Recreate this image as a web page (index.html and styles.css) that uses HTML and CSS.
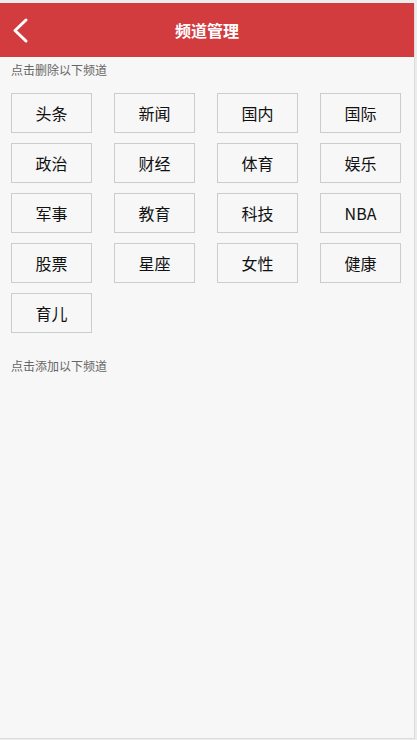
FILE: index.html
```html
<!DOCTYPE html>
<html lang="zh">
<head>
<meta charset="utf-8">
<title>频道管理</title>
<link rel="stylesheet" href="styles.css">
</head>
<body>
<div class="frame">
  <header class="topbar">
    <svg class="back" width="30" height="54" viewBox="0 0 30 54">
      <polyline points="26,17 15,27.5 26,38" fill="none" stroke="#fff" stroke-width="3" stroke-linecap="round" stroke-linejoin="round"/>
    </svg>
    <h1 class="title">频道管理</h1>
  </header>
  <p class="hint">点击删除以下频道</p>
  <div class="grid">
    <div class="chip">头条</div>
    <div class="chip">新闻</div>
    <div class="chip">国内</div>
    <div class="chip">国际</div>
    <div class="chip">政治</div>
    <div class="chip">财经</div>
    <div class="chip">体育</div>
    <div class="chip">娱乐</div>
    <div class="chip">军事</div>
    <div class="chip">教育</div>
    <div class="chip">科技</div>
    <div class="chip">NBA</div>
    <div class="chip">股票</div>
    <div class="chip">星座</div>
    <div class="chip">女性</div>
    <div class="chip">健康</div>
    <div class="chip">育儿</div>
  </div>
  <p class="hint hint-add">点击添加以下频道</p>
</div>
</body>
</html>
```
FILE: styles.css
```css
html, body {
  margin: 0;
  padding: 0;
  background: #ececec;
}
body {
  font-family: "Noto Sans CJK SC", "Noto Sans", sans-serif;
}
.frame {
  box-sizing: border-box;
  margin-top: 3px;
  width: 415px;
  height: 736px;
  background: #f7f7f7;
  border-right: 1px solid #dcdcdc;
  border-bottom: 1px solid #dcdcdc;
}
.topbar {
  position: relative;
  height: 54px;
  background: #d33c3f;
  display: flex;
  align-items: center;
  justify-content: center;
}
.back {
  position: absolute;
  left: 0;
  top: 0;
}
.title {
  margin: 0;
  color: #fff;
  font-size: 16px;
  font-weight: bold;
  line-height: 54px;
}
.hint {
  margin: 3px 0 0;
  padding-left: 11px;
  font-size: 12px;
  line-height: 20px;
  color: #666;
}
.hint-add {
  margin-top: 23px;
}
.grid {
  margin-top: 13px;
  padding-left: 11px;
  display: grid;
  grid-template-columns: repeat(4, 81px);
  grid-auto-rows: 40px;
  column-gap: 22px;
  row-gap: 10px;
}
.chip {
  box-sizing: border-box;
  border: 1px solid #cccccc;
  display: flex;
  align-items: center;
  justify-content: center;
  font-size: 16px;
  color: #111;
}
```
